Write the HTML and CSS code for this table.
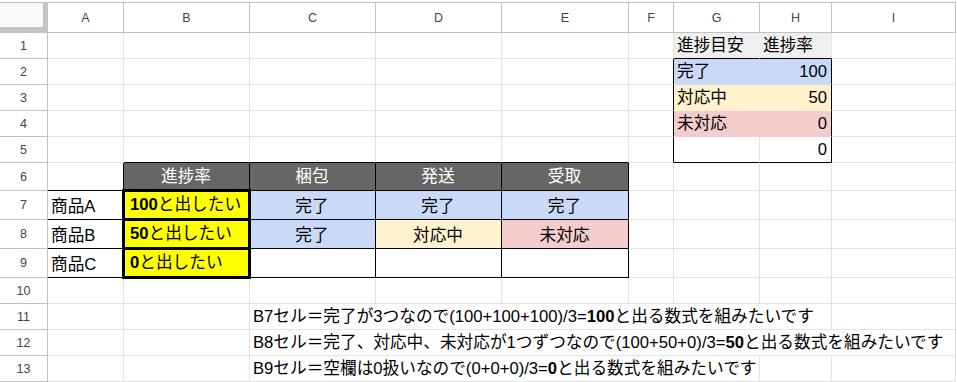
FILE: index.html
```html
<!DOCTYPE html>
<html lang="ja">
<head>
<meta charset="utf-8">
<title>Sheet</title>
<link rel="stylesheet" href="styles.css">
</head>
<body>
<div class="sheet">
  <div class="corner"></div>
  <div class="ch">A</div><div class="ch">B</div><div class="ch">C</div><div class="ch">D</div><div class="ch">E</div><div class="ch">F</div><div class="ch">G</div><div class="ch">H</div><div class="ch">I</div>

  <div class="rh">1</div>
  <div class="c"></div><div class="c"></div><div class="c"></div><div class="c"></div><div class="c"></div><div class="c"></div>
  <div class="c grey bb">進捗目安</div><div class="c grey grey-last bb">進捗率</div><div class="c"></div>

  <div class="rh">2</div>
  <div class="c"></div><div class="c"></div><div class="c"></div><div class="c"></div><div class="c"></div><div class="c br"></div>
  <div class="c blue">完了</div><div class="c blue right br">100</div><div class="c"></div>

  <div class="rh">3</div>
  <div class="c"></div><div class="c"></div><div class="c"></div><div class="c"></div><div class="c"></div><div class="c br"></div>
  <div class="c cream">対応中</div><div class="c cream right br">50</div><div class="c"></div>

  <div class="rh">4</div>
  <div class="c"></div><div class="c"></div><div class="c"></div><div class="c"></div><div class="c"></div><div class="c br"></div>
  <div class="c pink">未対応</div><div class="c pink right br">0</div><div class="c"></div>

  <div class="rh">5</div>
  <div class="c"></div><div class="c bb"></div><div class="c bb"></div><div class="c bb"></div><div class="c bb"></div><div class="c br"></div>
  <div class="c bb"></div><div class="c bb br right">0</div><div class="c"></div>

  <div class="rh">6</div>
  <div class="c br bb"></div>
  <div class="c dark">進捗率</div><div class="c dark">梱包</div><div class="c dark">発送</div><div class="c dark">受取</div>
  <div class="c"></div><div class="c"></div><div class="c"></div><div class="c"></div>

  <div class="rh">7</div>
  <div class="c bb">商品A</div>
  <div class="c yellow thick"><b>100</b>と出したい</div>
  <div class="c boxed blue center">完了</div><div class="c boxed blue center">完了</div><div class="c boxed blue center">完了</div>
  <div class="c"></div><div class="c"></div><div class="c"></div><div class="c"></div>

  <div class="rh">8</div>
  <div class="c bb">商品B</div>
  <div class="c yellow thick"><b>50</b>と出したい</div>
  <div class="c boxed blue center">完了</div><div class="c boxed cream center">対応中</div><div class="c boxed pink center">未対応</div>
  <div class="c"></div><div class="c"></div><div class="c"></div><div class="c"></div>

  <div class="rh">9</div>
  <div class="c bb">商品C</div>
  <div class="c yellow thick"><b>0</b>と出したい</div>
  <div class="c boxed"></div><div class="c boxed"></div><div class="c boxed"></div>
  <div class="c"></div><div class="c"></div><div class="c"></div><div class="c"></div>

  <div class="rh">10</div>
  <div class="c"></div><div class="c"></div><div class="c"></div><div class="c"></div><div class="c"></div><div class="c"></div><div class="c"></div><div class="c"></div><div class="c"></div>

  <div class="rh">11</div>
  <div class="c"></div><div class="c"></div>
  <div class="c span6">B7セル＝完了が3つなので(100+100+100)/3=<b>100</b>と出る数式を組みたいです</div>
  <div class="c"></div>

  <div class="rh">12</div>
  <div class="c"></div><div class="c"></div>
  <div class="c span7">B8セル＝完了、対応中、未対応が1つずつなので(100+50+0)/3=<b>50</b>と出る数式を組みたいです</div>

  <div class="rh">13</div>
  <div class="c"></div><div class="c"></div>
  <div class="c span5">B9セル＝空欄は0扱いなので(0+0+0)/3=<b>0</b>と出る数式を組みたいです</div>
  <div class="c"></div><div class="c"></div>
</div>
</body>
</html>
```

FILE: styles.css
```css
* {
  box-sizing: border-box;
}

html, body {
  margin: 0;
  padding: 0;
  background: #ffffff;
}

body {
  font-family: "Liberation Sans", "Noto Sans CJK JP", sans-serif;
  color: #000000;
  overflow: hidden;
}

.sheet {
  display: grid;
  grid-template-columns: 48px 76px 126px 126px 126px 127px 45px 86px 72px 124px;
  grid-template-rows: 31px repeat(5, 26px) 28px repeat(3, 29px) repeat(4, 26px);
  margin-top: 2px;
}

.corner {
  background: #f8f9fa;
  border-top: 1px solid #c0c0c0;
  border-right: 5px solid #c4c4c4;
  border-bottom: 6px solid #c4c4c4;
}

.ch {
  display: flex;
  align-items: center;
  justify-content: center;
  border-top: 1px solid #c0c0c0;
  border-right: 1px solid #c0c0c0;
  border-bottom: 1px solid #c0c0c0;
  font-size: 12.5px;
  color: #444444;
  background: #ffffff;
}

.rh {
  display: flex;
  align-items: center;
  justify-content: center;
  border-right: 1px solid #c0c0c0;
  border-bottom: 1px solid #c0c0c0;
  font-size: 12.5px;
  color: #444444;
  background: #ffffff;
}

.c {
  display: flex;
  align-items: flex-end;
  justify-content: flex-start;
  padding: 0 4px 2px 3px;
  border-right: 1px solid #e2e3e3;
  border-bottom: 1px solid #e2e3e3;
  font-size: 16.67px;
  line-height: 20px;
  white-space: nowrap;
  overflow: visible;
}

.c b {
  font-weight: bold;
}

.bb {
  border-bottom-color: #000000;
}

.br {
  border-right-color: #000000;
}

.right {
  justify-content: flex-end;
}

.center {
  justify-content: center;
}

.grey {
  background: #efefef;
  border-right-color: #efefef;
}

.grey-last {
  border-right-color: #e2e3e3;
}

.blue {
  background: #c9daf8;
  border-right-color: #c9daf8;
  border-bottom-color: #c9daf8;
}

.cream {
  background: #fff2cc;
  border-right-color: #fff2cc;
  border-bottom-color: #fff2cc;
}

.pink {
  background: #f4cccc;
  border-right-color: #f4cccc;
  border-bottom-color: #f4cccc;
}

.c.br {
  border-right-color: #000000;
}

.c.bb {
  border-bottom-color: #000000;
}

.dark {
  background: #666666;
  color: #ffffff;
  justify-content: center;
  align-items: center;
  padding-bottom: 0;
  border-right-color: #000000;
  border-bottom-color: #000000;
}

.c.boxed {
  border-right-color: #000000;
  border-bottom-color: #000000;
}

.yellow {
  background: #ffff00;
  border-right-color: #000000;
  border-bottom-color: #000000;
}

.thick {
  position: relative;
  align-items: center;
  padding: 0 4px 0 6px;
}

.thick::after {
  content: "";
  position: absolute;
  left: -2px;
  top: -2px;
  right: -2px;
  bottom: -2px;
  border: 3px solid #000000;
  pointer-events: none;
}

.span5 {
  grid-column: span 5;
}

.span6 {
  grid-column: span 6;
}

.span7 {
  grid-column: span 7;
}
```
